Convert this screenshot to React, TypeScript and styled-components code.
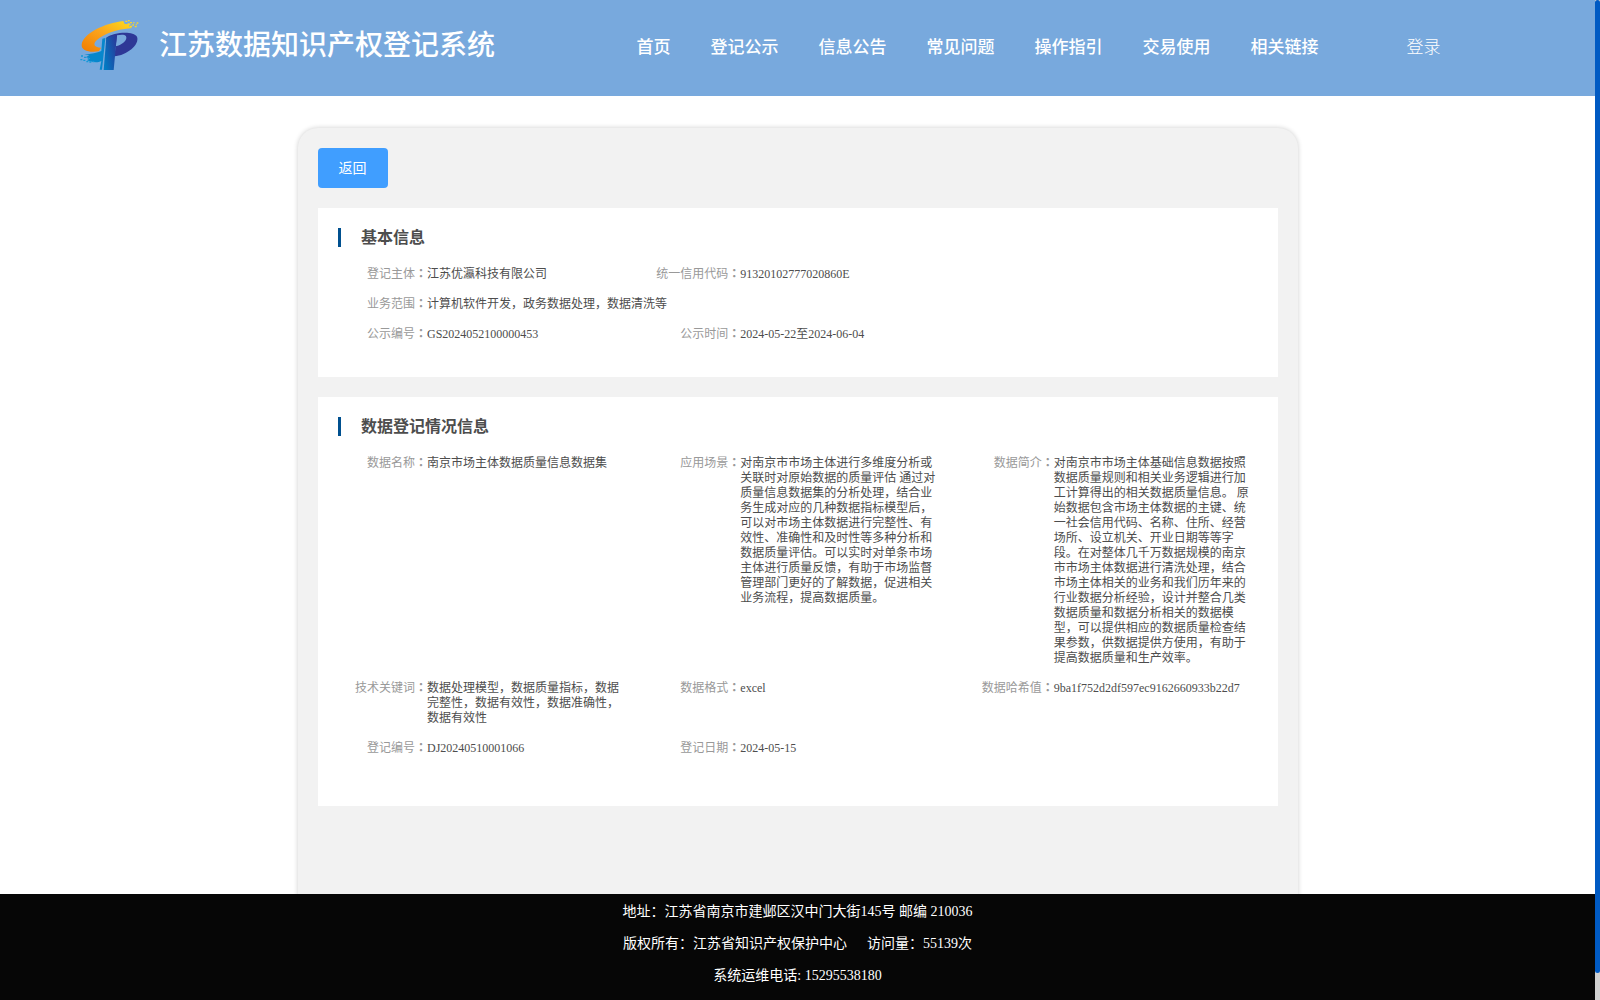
import React from 'react';
import styled, { createGlobalStyle, css } from 'styled-components';

const GlobalStyle = createGlobalStyle`
  * { box-sizing: border-box; }
  html, body { margin: 0; padding: 0; background: #fff; }
  body {
    font-family: "Liberation Serif", "Noto Sans CJK SC", serif;
    overflow: hidden;
  }
`;

const Viewport = styled.div`
  display: flex;
  width: 1600px;
  height: 1000px;
  overflow: hidden;
`;

const Page = styled.div`
  display: flex;
  flex-direction: column;
  width: 1595px;
  height: 1000px;
`;

const ScrollTrack = styled.div`
  width: 5px;
  height: 1000px;
  background: #d0d0d0;
`;

const ScrollThumb = styled.div`
  height: 973px;
  border-radius: 3px;
  background: #005ac3;
`;

const Header = styled.header`
  display: flex;
  align-items: flex-start;
  flex: none;
  height: 96px;
  padding-left: 70px;
  background: #78a9dd;
  color: #fff;
`;

const Logo = styled.svg`
  display: block;
  flex: none;
  width: 80px;
  height: 70px;
  margin-top: 10px;
`;

const SiteTitle = styled.h1`
  width: 477.5px;
  margin: 26px 0 0 9px;
  font-size: 28px;
  line-height: 40px;
  font-weight: 500;
  white-space: nowrap;
`;

const Nav = styled.nav`
  display: flex;
  gap: 40px;
  margin-top: 36px;
  white-space: nowrap;
`;

const NavLink = styled.a<{ $light?: boolean }>`
  font-size: 17px;
  line-height: 24px;
  font-weight: 500;
  ${(p) => p.$light && css`
    margin-left: 48px;
    font-weight: 300;
  `}
`;

const Main = styled.main`
  flex: 1;
  min-height: 0;
  padding-top: 32px;
  overflow: hidden;
`;

const Card = styled.div`
  width: 1000px;
  height: 800px;
  margin: 0 0 0 298px;
  padding: 20px;
  border-radius: 20px;
  background: #f2f2f2;
  box-shadow: 0 0 5px rgba(0, 0, 0, 0.2);
`;

const BackButton = styled.button`
  display: block;
  width: 70px;
  height: 40px;
  margin-bottom: 20px;
  padding: 0 1px 3px 0;
  border: 0;
  border-radius: 4px;
  background: #409eff;
  color: #fff;
  font: 400 14px "Liberation Serif", "Noto Sans CJK SC", serif;
`;

const Section = styled.section<{ $height: number }>`
  height: ${(p) => p.$height}px;
  margin-bottom: 20px;
  padding: 20px 0 0 20px;
  background: #fff;
  color: #4d4d4d;
`;

const SectionTitle = styled.h2`
  height: 19px;
  margin: 0 0 20px;
  padding-left: 20px;
  border-left: 3px solid #00508f;
  font-size: 16px;
  line-height: 19px;
  font-weight: 700;
`;

const Row = styled.div`
  display: grid;
  grid-template-columns: repeat(3, 313.33px);
  margin-bottom: 15px;
  font-size: 12px;
  line-height: 15px;
`;

const Field = styled.div<{ $wide?: boolean }>`
  display: flex;
  grid-column: span ${(p) => (p.$wide ? 3 : 1)};
  white-space: pre;
`;

const Label = styled.div`
  flex: none;
  width: 89px;
  text-align: right;
  color: #999;
`;

const Colon = styled.span`
  font-family: "Noto Sans CJK TC", sans-serif;
  font-weight: 700;
  line-height: 0;
`;

const Footer = styled.footer`
  display: flex;
  flex-direction: column;
  flex: none;
  align-items: center;
  height: 106px;
  padding: 2px 0 0;
  background: #060606;
  color: #fff;
  font-size: 14px;
  line-height: 32px;
`;

const FooterLine = styled.div`
  display: flex;
  gap: 20px;
  white-space: pre;
`;

const navItems = ['首页', '登记公示', '信息公告', '常见问题', '操作指引', '交易使用', '相关链接'];

type Item = { label: string; lines: string[]; wide?: boolean };

const basicRows: Item[][] = [
  [
    { label: '登记主体', lines: ['江苏优瀛科技有限公司'] },
    { label: '统一信用代码', lines: ['91320102777020860E'] },
  ],
  [{ label: '业务范围', lines: ['计算机软件开发，政务数据处理，数据清洗等'], wide: true }],
  [
    { label: '公示编号', lines: ['GS2024052100000453'] },
    { label: '公示时间', lines: ['2024-05-22至2024-06-04'] },
  ],
];

const dataRows: Item[][] = [
  [
    { label: '数据名称', lines: ['南京市场主体数据质量信息数据集'] },
    {
      label: '应用场景',
      lines: [
        '对南京市市场主体进行多维度分析或',
        '关联时对原始数据的质量评估 通过对',
        '质量信息数据集的分析处理，结合业',
        '务生成对应的几种数据指标模型后，',
        '可以对市场主体数据进行完整性、有',
        '效性、准确性和及时性等多种分析和',
        '数据质量评估。可以实时对单条市场',
        '主体进行质量反馈，有助于市场监督',
        '管理部门更好的了解数据，促进相关',
        '业务流程，提高数据质量。',
      ],
    },
    {
      label: '数据简介',
      lines: [
        '对南京市市场主体基础信息数据按照',
        '数据质量规则和相关业务逻辑进行加',
        '工计算得出的相关数据质量信息。 原',
        '始数据包含市场主体数据的主键、统',
        '一社会信用代码、名称、住所、经营',
        '场所、设立机关、开业日期等等字',
        '段。在对整体几千万数据规模的南京',
        '市市场主体数据进行清洗处理，结合',
        '市场主体相关的业务和我们历年来的',
        '行业数据分析经验，设计并整合几类',
        '数据质量和数据分析相关的数据模',
        '型，可以提供相应的数据质量检查结',
        '果参数，供数据提供方使用，有助于',
        '提高数据质量和生产效率。',
      ],
    },
  ],
  [
    {
      label: '技术关键词',
      lines: ['数据处理模型，数据质量指标，数据', '完整性，数据有效性，数据准确性，', '数据有效性'],
    },
    { label: '数据格式', lines: ['excel'] },
    { label: '数据哈希值', lines: ['9ba1f752d2df597ec9162660933b22d7'] },
  ],
  [
    { label: '登记编号', lines: ['DJ20240510001066'] },
    { label: '登记日期', lines: ['2024-05-15'] },
  ],
];

function Rows({ rows }: { rows: Item[][] }) {
  return (
    <>
      {rows.map((row, i) => (
        <Row key={i}>
          {row.map((item) => (
            <Field key={item.label} $wide={item.wide}>
              <Label>
                {item.label}
                <Colon>：</Colon>
              </Label>
              <div>{item.lines.join('\n')}</div>
            </Field>
          ))}
        </Row>
      ))}
    </>
  );
}

function LogoMark() {
  return (
    <Logo viewBox="0 0 240 210">
      <defs>
        <linearGradient id="swoosh" x1="0" y1="1" x2="1" y2="0">
          <stop offset="0" stopColor="#f07c00" />
          <stop offset="0.5" stopColor="#fba31c" />
          <stop offset="1" stopColor="#fddc1c" />
        </linearGradient>
        <linearGradient id="stem" x1="0" y1="0.8" x2="1" y2="0.2">
          <stop offset="0" stopColor="#007cc4" />
          <stop offset="1" stopColor="#29399a" />
        </linearGradient>
      </defs>
      <path
        d="M160 33 C105 39 39 70 35 104 C34 121 55 128 87 124 L93 113 C74 113 67 103 80 91 C100 72 138 58 187 54 L176 48 L183 43 L164 42 Z"
        fill="url(#swoosh)"
      />
      <path
        d="M166 32h6v4h-6zM174 30h5v4h-5zM180 36h6v4h-6zM173 40h6v4h-6zM187 43h5v4h-5zM180 47h6v4h-6zM194 48h6v4h-6zM189 37h5v3h-5zM200 37h5v4h-5zM197 43h4v3h-4z"
        fill="#fbd42a"
      />
      <path
        d="M109 83 C132 66 190 62 201 80 C210 104 170 136 133 139 L137 109 C156 106 174 90 168 79 C164 73 152 74 141 76 L137 109 L112 139 Z"
        fill="#2e3896"
      />
      <path d="M109 83 L141 74 L131 180 L101 180 Z" fill="url(#stem)" />
      <path
        d="M97 86 L106 84 L96 179 L89 179 L94 153 C80 161 63 155 51 151 L61 145 L47 142 L58 136 L43 134 C64 132 81 128 94 123 Z"
        fill="#0787cc"
      />
      <path
        d="M33 136h6v4h-6zM42 140h6v4h-6zM31 147h6v4h-6zM40 149h6v4h-6zM53 144h6v4h-6zM49 153h6v4h-6zM58 154h6v4h-6zM68 153h5v4h-5z"
        fill="#159ad9"
      />
    </Logo>
  );
}

export default function App() {
  return (
    <>
      <GlobalStyle />
      <Viewport>
        <Page>
          <Header>
            <LogoMark />
            <SiteTitle>江苏数据知识产权登记系统</SiteTitle>
            <Nav>
              {navItems.map((t) => (
                <NavLink key={t}>{t}</NavLink>
              ))}
              <NavLink $light>登录</NavLink>
            </Nav>
          </Header>
          <Main>
            <Card>
              <BackButton>返回</BackButton>
              <Section $height={169}>
                <SectionTitle>基本信息</SectionTitle>
                <Rows rows={basicRows} />
              </Section>
              <Section $height={409}>
                <SectionTitle>数据登记情况信息</SectionTitle>
                <Rows rows={dataRows} />
              </Section>
            </Card>
          </Main>
          <Footer>
            <FooterLine>地址：江苏省南京市建邺区汉中门大街145号 邮编 210036</FooterLine>
            <FooterLine>
              <span>版权所有：江苏省知识产权保护中心</span>
              <span>访问量：55139次</span>
            </FooterLine>
            <FooterLine>系统运维电话: 15295538180</FooterLine>
          </Footer>
        </Page>
        <ScrollTrack>
          <ScrollThumb />
        </ScrollTrack>
      </Viewport>
    </>
  );
}
